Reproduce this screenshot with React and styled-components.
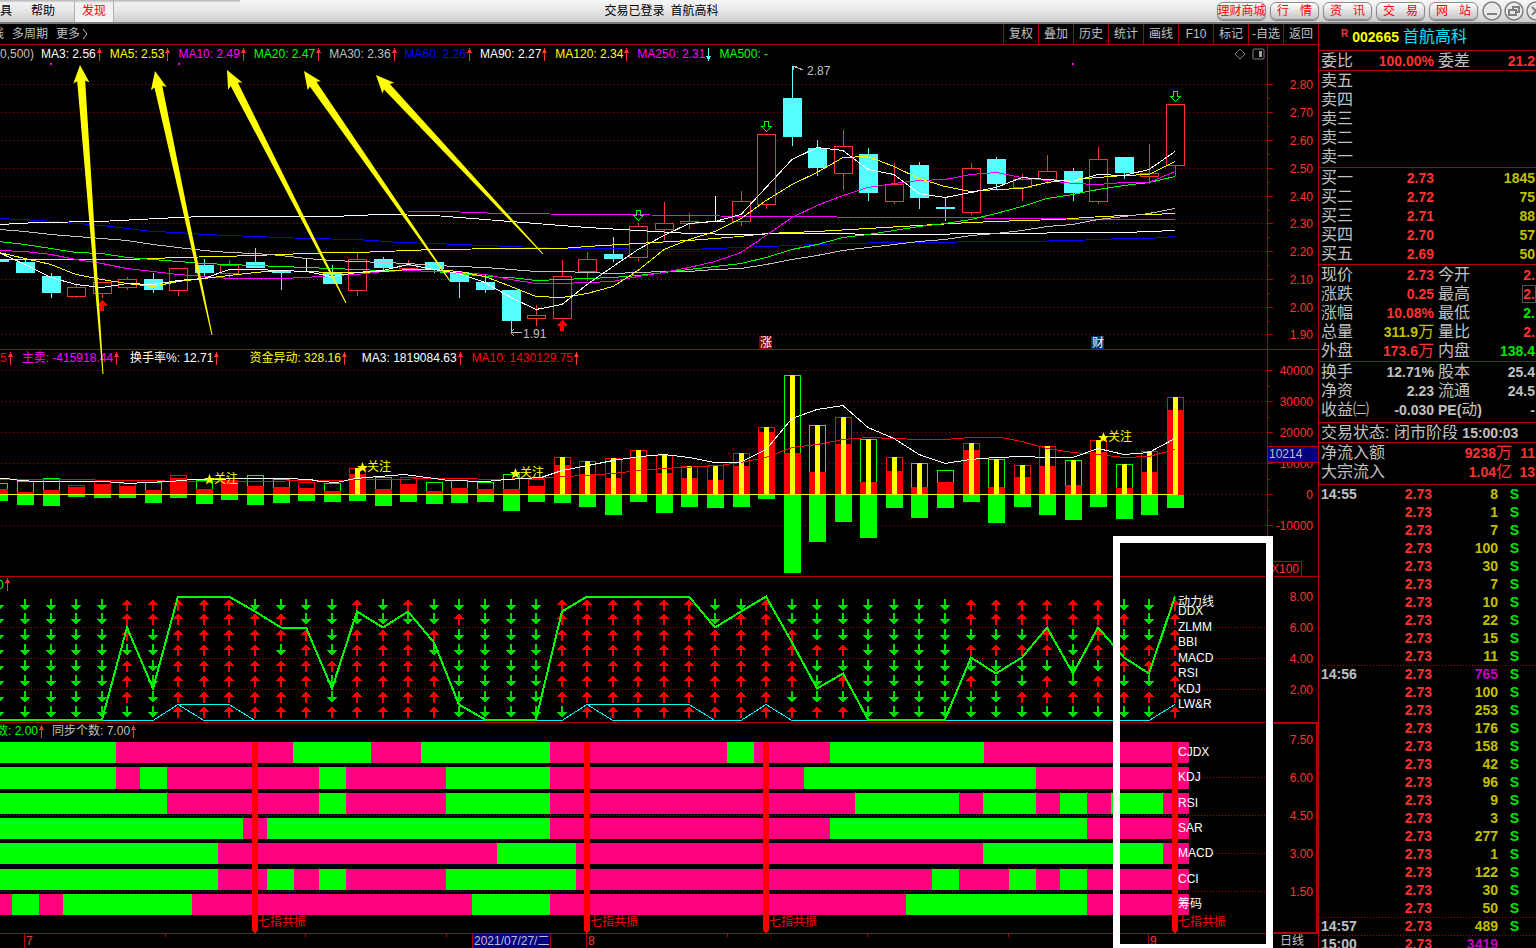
import styled, { createGlobalStyle } from "styled-components";

const GlobalStyle = createGlobalStyle`
  *,
  *::before {
    box-sizing: border-box;
  }

  body {
    margin: 0;
    background: #000;
    color: #c0c0c0;
    font: 12px/16px "Liberation Sans", "Noto Sans CJK SC", sans-serif;
    overflow: hidden;
  }

  button {
    font: inherit;
    cursor: pointer;
  }
`;

const colors = {
  line: "#b00000",
  red: "#ff3232",
  cyan: "#54ffff",
  gray: "#c0c0c0",
  yellow: "#ffff00",
  olive: "#c0c000",
  magenta: "#ff00ff",
  purple: "#c000c0",
  green: "#00ff00",
  darkGreen: "#00e600",
  blue: "#0000ff",
  white: "#ffffff",
};

/* ---------- Layout ---------- */

const Page = styled.div`
  display: flex;
  flex-direction: column;
  height: 100vh;
  overflow: hidden;
`;

const Workspace = styled.div`
  display: flex;
  flex: 1;
  min-height: 0;
`;

const ChartColumn = styled.main`
  position: relative;
  display: flex;
  flex-direction: column;
  flex: 1;
  min-width: 0;
  overflow: hidden;
`;

/* ---------- Title bar ---------- */

const TitleBar = styled.header`
  position: relative;
  display: flex;
  align-items: center;
  height: 24px;
  flex: none;
  overflow: hidden;
  color: #000;
  background: linear-gradient(#f6f6f6, #e6e6e6 50%, #cdcdcd);
  border-bottom: 2px solid #7c7c7c;

  &::before {
    content: "";
    position: absolute;
    top: 0;
    left: 0;
    width: 240px;
    height: 3px;
    background: linear-gradient(#b4b4b4, transparent);
  }
`;

const Menu = styled.nav`
  display: flex;
  height: 100%;
`;

const MenuButton = styled.button`
  padding: 0;
  width: ${(props) => props.$width}px;
  color: ${(props) => (props.$active ? "#ff0000" : "#000")};
  background: ${(props) => (props.$active ? "#f2f2f2" : "none")};
  border: solid #b0b0b0;
  border-width: ${(props) => (props.$active ? "0 1px" : "0")};
  text-align: ${(props) => props.$align || "center"};
`;

const Title = styled.div`
  display: flex;
  justify-content: center;
  gap: 6px;
  flex: 1;
  padding-right: 8px;
`;

const HeaderActions = styled.div`
  display: flex;
  align-items: center;
  gap: 4px;
  flex: none;
  margin-right: -8px;
`;

const PillButton = styled.button`
  display: flex;
  align-items: center;
  justify-content: ${(props) => (props.$spread ? "space-between" : "center")};
  width: 49px;
  height: 18px;
  padding: ${(props) => (props.$spread ? "0 6px" : "0")};
  color: #ff0000;
  white-space: nowrap;
  background: linear-gradient(#fff, #dcdcdc 60%, #c4c4c4);
  border: 1px solid #8c8c8c;
  border-radius: 6px;
  box-shadow: 0 1px 1px #808080;
`;

const WindowButton = styled.button`
  display: flex;
  width: 20px;
  height: 20px;
  margin-right: -2px;
  padding: 0;
  background: none;
  border: 0;
`;

/* ---------- Toolbar ---------- */

const Toolbar = styled.div`
  display: flex;
  justify-content: space-between;
  height: 21px;
  flex: none;
  overflow: hidden;
  border-bottom: 1px solid ${colors.line};
`;

const PeriodGroup = styled.div`
  display: flex;
  gap: 8px;
  margin-left: -8px;
`;

const ToolGroup = styled.div`
  display: flex;
`;

const ToolButton = styled.button`
  display: flex;
  align-items: center;
  gap: 2px;
  padding: 0;
  color: ${colors.gray};
  background: none;
  border: 0;
`;

const BoxedToolButton = styled(ToolButton)`
  justify-content: center;
  width: 35px;
  border-left: 1px solid ${colors.line};
`;

/* ---------- Chart panels ---------- */

const Panel = styled.section`
  display: grid;
  grid-template-columns: minmax(0, 1fr) 51px;
  flex: none;
  border-bottom: 1px solid ${colors.line};
`;

const PlotColumn = styled.div`
  min-width: 0;
  overflow: hidden;
`;

const Legend = styled.div`
  display: flex;
  align-items: center;
  height: ${(props) => props.$height || 16}px;
  margin-left: -${(props) => props.$cut || 0}px;
  padding-right: 2px;
  white-space: nowrap;
`;

const LegendItem = styled.span`
  display: flex;
  align-items: center;
  margin-right: ${(props) => props.$space || 7}px;
  color: ${(props) => props.$color};
`;

const LegendTools = styled.span`
  display: flex;
  align-items: center;
  gap: 6px;
  margin-left: auto;
`;

const Plot = styled.svg`
  display: block;
  width: 100%;
  height: ${(props) => props.$height}px;
  shape-rendering: crispEdges;
`;

/* Takes its height from the plot beside it */
const AxisColumn = styled.svg`
  display: block;
  width: 100%;
  height: 0;
  min-height: 100%;
  border: solid ${colors.line};
  border-width: ${(props) => (props.$selected ? "1px 2px 1px 1px" : "0 0 0 1px")};
  shape-rendering: crispEdges;
`;

const TimeAxis = styled.div`
  display: grid;
  grid-template-columns: minmax(0, 1fr) 51px;
  flex: 1;
  min-height: 14px;
  line-height: 14px;
`;

const PeriodName = styled.span`
  padding-left: 13px;
`;

const Annotations = styled.svg`
  position: absolute;
  inset: 0;
  width: 100%;
  height: 100%;
  pointer-events: none;
`;

/* ---------- Quote sidebar ---------- */

const Sidebar = styled.aside`
  width: 218px;
  flex: none;
  overflow: hidden;
  border-left: 1px solid ${colors.line};
`;

const StockHeader = styled.h1`
  display: flex;
  align-items: center;
  height: 27px;
  margin: 0;
  padding-left: 22px;
  color: ${colors.yellow};
  font-size: 14px;
  border-bottom: 1px solid ${colors.line};
`;

const StockFlag = styled.sup`
  align-self: flex-start;
  margin-right: 4px;
  color: ${colors.red};
  font-size: 10px;
  line-height: 20px;
`;

const StockName = styled.span`
  margin-left: 4px;
  color: #00e4ff;
  font-size: 16px;
  font-weight: 400;
`;

const QuoteTable = styled.table`
  display: block;
  padding-bottom: ${(props) => props.$pad || 0}px;
  border-bottom: 1px solid ${colors.line};

  tbody {
    display: block;
  }
`;

const QuoteRow = styled.tr`
  display: grid;
  grid-template-columns: ${(props) => props.$columns || "48px 65px 48px 1fr"};
  align-items: center;
  height: 19px;
  padding: 0 1px 0 2px;
  white-space: nowrap;
`;

const Label = styled.th`
  padding: 0;
  color: ${colors.gray};
  font-size: 16px;
  font-weight: 400;
  line-height: 20px;
  text-align: left;

  td + & {
    padding-left: 4px;
  }
`;

const Value = styled.td`
  justify-self: ${(props) => (props.$boxed ? "end" : "stretch")};
  padding: 0;
  color: ${(props) => colors[props.$tone] || colors.gray};
  font-size: 14px;
  font-weight: 700;
  line-height: 16px;
  text-align: right;
  outline: ${(props) => (props.$boxed ? "1px solid #555" : "none")};
`;

const Unit = styled.span`
  font-size: 16px;
  font-weight: 400;
`;

const BoldNote = styled.span`
  font-size: 14px;
  font-weight: 700;
`;

const TickTable = styled(QuoteTable)`
  border-bottom: 0;
`;

const TickRow = styled(QuoteRow)`
  height: 18px;
  background: ${(props) =>
    props.$divided
      ? `repeating-linear-gradient(90deg, ${colors.line} 0 1px, #000 1px 3px) 0 0 / 100% 1px no-repeat`
      : "none"};
`;

const TickTime = styled(Value)`
  text-align: left;
`;

/* ---------- Data ---------- */

const FIRST = -1;
const columnX = (index) => Math.round(25 + (index + FIRST) * 25.556);

// kind (u: up, d: down, f: flat), high, body top, body bottom, low
const candles = [
  ["d", 259, 259, 262, 262],
  ["d", 260, 262, 273, 273],
  ["d", 273, 276, 293, 298],
  ["u", 285, 287, 296, 298],
  ["u", 282, 282, 293, 298],
  ["u", 277, 279, 287, 290],
  ["d", 273, 279, 290, 293],
  ["u", 268, 268, 290, 296],
  ["d", 259, 265, 273, 277],
  ["u", 260, 265, 273, 279],
  ["d", 248, 262, 268, 268],
  ["d", 271, 271, 273, 290],
  ["f", 258, 271, 271, 271],
  ["d", 265, 272, 284, 284],
  ["u", 253, 259, 290, 296],
  ["d", 257, 259, 268, 270],
  ["u", 260, 265, 268, 270],
  ["d", 262, 262, 269, 273],
  ["d", 272, 272, 282, 298],
  ["d", 275, 282, 290, 293],
  ["d", 290, 290, 321, 333],
  ["u", 305, 315, 318, 326],
  ["u", 260, 276, 318, 318],
  ["u", 252, 259, 271, 281],
  ["d", 237, 254, 259, 262],
  ["u", 223, 226, 257, 261],
  ["u", 202, 223, 229, 240],
  ["u", 213, 221, 223, 229],
  ["f", 196, 221, 221, 222],
  ["u", 191, 201, 221, 226],
  ["u", 134, 134, 204, 209],
  ["d", 66, 98, 137, 146],
  ["d", 140, 148, 168, 176],
  ["u", 130, 146, 173, 190],
  ["d", 148, 154, 193, 201],
  ["u", 163, 184, 201, 204],
  ["d", 162, 165, 198, 209],
  ["d", 197, 207, 209, 221],
  ["u", 163, 168, 212, 215],
  ["d", 157, 159, 184, 189],
  ["u", 174, 179, 187, 201],
  ["u", 155, 171, 179, 184],
  ["d", 168, 171, 193, 201],
  ["u", 147, 159, 201, 204],
  ["d", 157, 157, 173, 179],
  ["u", 144, 173, 176, 184],
  ["u", 104, 104, 165, 176],
];

const averages = [
  {
    color: colors.gray,
    ys: [
      229, 231, 234, 236, 238, 240, 244, 247, 250, 252, 253, 255, 258, 260, 261, 262, 263, 265, 266, 267, 269, 271, 271,
      272, 273, 272, 271, 271, 269, 268, 264, 259, 255, 250, 247, 244, 241, 239, 235, 233, 230, 226, 224, 219, 216, 213,
      208,
    ],
  },
  {
    color: colors.green,
    ys: [
      241, 244, 248, 252, 253, 257, 259, 261, 263, 264, 265, 266, 267, 268, 269, 270, 270, 271, 273, 276, 277, 280, 279,
      278, 277, 275, 272, 269, 266, 263, 257, 249, 244, 237, 234, 230, 226, 223, 219, 213, 206, 198, 194, 189, 185, 182,
      176,
    ],
  },
  {
    color: colors.magenta,
    ys: [
      250, 251, 254, 259, 263, 268, 271, 274, 276, 278, 278, 278, 277, 275, 274, 271, 270, 271, 272, 274, 279, 283, 283,
      282, 281, 276, 272, 267, 261, 252, 235, 217, 205, 195, 187, 183, 180, 179, 174, 172, 177, 180, 183, 184, 182, 182,
      171,
    ],
  },
  {
    color: colors.yellow,
    ys: [
      252, 258, 264, 274, 279, 283, 286, 281, 278, 275, 272, 270, 271, 272, 272, 271, 269, 269, 271, 276, 286, 296, 297,
      293, 286, 270, 249, 239, 231, 218, 200, 184, 172, 157, 156, 166, 178, 186, 191, 189, 188, 182, 179, 177, 175, 174,
      161,
    ],
  },
  {
    color: colors.white,
    ys: [
      252, 264, 277, 284, 287, 283, 284, 280, 278, 269, 269, 270, 271, 276, 272, 270, 264, 269, 273, 282, 297, 309, 304,
      284, 266, 249, 235, 223, 221, 214, 187, 159, 147, 150, 169, 174, 193, 197, 192, 187, 177, 179, 181, 174, 175, 169,
      151,
    ],
  },
];

const longAverages = [
  {
    color: colors.blue,
    points:
      "0,218 40,220 66,222 102,225 127,228 153,231 178,232 204,234 255,236 306,238 357,239 400,242 434,243 510,246 562,248 613,248 640,249 690,249 740,247 792,245 843,243 894,242 1022,241 1073,240 1124,238 1149,238 1175,236",
  },
  {
    color: colors.yellow,
    points:
      "0,259 127,259 178,257 220,256 255,255 306,253 332,252 357,252 383,251 434,249 510,248 562,248 587,246 638,243 689,240 740,236 766,233 817,231 868,228 919,225 970,222 1022,220 1060,219 1085,217 1124,215 1175,213",
  },
  {
    color: colors.white,
    points:
      "0,224 38,222 100,221 178,217 204,216 332,216 380,214 434,215 485,219 536,223 587,227 638,230 689,233 740,234 792,233 830,233 880,234 1022,233 1073,232 1124,232 1175,230",
  },
  {
    color: colors.magenta,
    points: "408,211 447,211 500,213 600,214 700,215 740,216 932,217 1035,218 1098,219 1175,219",
  },
];

// outline (r/g), outline top, buy top, sell bottom, has yellow core
const volumes = [
  ["g", 483, 489, 501],
  ["g", 481, 492, 505],
  ["g", 478, 490, 506],
  ["r", 485, 487, 497],
  ["r", 481, 484, 498],
  ["r", 483, 486, 498],
  ["g", 482, 490, 503],
  ["r", 475, 478, 498],
  ["g", 480, 489, 504],
  ["r", 480, 482, 500],
  ["g", 475, 486, 505],
  ["g", 479, 487, 503],
  ["r", 482, 488, 501],
  ["g", 483, 491, 502],
  ["r", 468, 474, 501, 1],
  ["g", 477, 489, 506],
  ["r", 477, 484, 502],
  ["g", 482, 491, 504],
  ["g", 480, 488, 503],
  ["g", 482, 489, 502],
  ["g", 474, 489, 511],
  ["r", 479, 486, 502],
  ["r", 457, 465, 503, 1],
  ["r", 461, 474, 507, 1],
  ["r", 458, 478, 515, 1],
  ["r", 450, 457, 502, 1],
  ["r", 455, 473, 513, 1],
  ["r", 466, 478, 507, 1],
  ["r", 465, 480, 508, 1],
  ["r", 453, 466, 507, 1],
  ["r", 427, 432, 499, 1],
  ["g", 375, 453, 573, 1],
  ["g", 425, 472, 542, 1],
  ["r", 417, 444, 522, 1],
  ["g", 439, 482, 538, 1],
  ["r", 457, 471, 508, 1],
  ["g", 463, 487, 518, 1],
  ["g", 470, 482, 508],
  ["r", 443, 450, 502, 1],
  ["g", 459, 487, 523, 1],
  ["r", 465, 477, 507, 1],
  ["r", 446, 466, 515, 1],
  ["g", 460, 485, 520, 1],
  ["r", 440, 452, 507, 1],
  ["g", 464, 488, 519, 1],
  ["r", 451, 472, 515, 1],
  ["r", 397, 410, 508, 1],
];

const watchMarks = [
  [209, 479],
  [362, 467],
  [515, 473],
  [1103, 437],
];

// one letter per indicator, top to bottom
const DOWN = "dddddddd";
const UP = "uuuuuuuu";
const signals = [
  DOWN, DOWN, DOWN, DOWN, DOWN,
  "uuuduuud", "uudddddd",
  UP, UP, UP,
  "duuuuuuu", "duuduuuu", "dduuuuuu", "dddduddu", "uduuuuuu", "dduuuuuu", "uduuuuuu", "dduduuuu", "dudddddd",
  DOWN, DOWN, DOWN,
  "uuuuuuud",
  UP, UP, UP, UP, UP,
  "dduuuuuu", "duuuuuuu",
  UP,
  "dduuuudu", "dddudddu", "dddududu",
  DOWN, DOWN, DOWN, DOWN,
  "uudududd", "uududddd", "uududdud", "uuuuduud", "uuddddud", "uuuuduud", "duduudud", "ddduudud",
  UP,
];
const signalTops = [599, 613, 629, 644, 660, 675, 691, 706];
const signalNames = [
  ["动力线", 602],
  ["DDX", 611],
  ["ZLMM", 627],
  ["BBI", 642],
  ["MACD", 658],
  ["RSI", 673],
  ["KDJ", 689],
  ["LW&R", 704],
];

const strips = [
  { name: "CJDX", top: 742, first: "g", stops: [116, 293, 371, 421, 550, 727, 754, 830, 984, 1189] },
  { name: "KDJ", top: 767, first: "g", stops: [116, 140, 167, 319, 346, 446, 550, 804, 1036, 1189] },
  {
    name: "RSI",
    top: 793,
    first: "g",
    stops: [167, 319, 346, 446, 550, 855, 959, 983, 1036, 1060, 1087, 1111, 1163, 1189],
  },
  { name: "SAR", top: 818, first: "g", stops: [243, 267, 550, 830, 1087, 1189] },
  { name: "MACD", top: 843, first: "g", stops: [218, 497, 576, 983, 1163, 1189] },
  {
    name: "CCI",
    top: 869,
    first: "g",
    stops: [218, 267, 294, 319, 346, 446, 576, 932, 959, 1009, 1036, 1060, 1087, 1189],
  },
  { name: "筹码", top: 894, first: "r", stops: [12, 39, 63, 192, 472, 550, 906, 1087, 1189] },
];

const resonances = [255, 587, 766, 1175];

const pointers = [
  [80, 65, 103, 374],
  [155, 71, 212, 335],
  [227, 70, 346, 303],
  [304, 71, 450, 281],
  [376, 75, 543, 254],
];

const ticks = [
  ["14:55", "8"],
  ["", "1"],
  ["", "7"],
  ["", "100"],
  ["", "30"],
  ["", "7"],
  ["", "10"],
  ["", "22"],
  ["", "15"],
  ["", "11"],
  ["14:56", "765"],
  ["", "100"],
  ["", "253"],
  ["", "176"],
  ["", "158"],
  ["", "42"],
  ["", "96"],
  ["", "9"],
  ["", "3"],
  ["", "277"],
  ["", "1"],
  ["", "122"],
  ["", "30"],
  ["", "50"],
  ["14:57", "489"],
  ["15:00", "3419"],
];

/* ---------- Small drawings ---------- */

function TrendArrow({ down }) {
  return (
    <svg width="7" height="13" viewBox="0 0 7 13" shapeRendering="crispEdges" aria-hidden="true">
      <g
        fill={down ? colors.cyan : colors.red}
        transform={down ? "rotate(180 3.5 6.5)" : undefined}
      >
        <path d="M3 0h1v13h-1z" />
        <path d="M3 1h1v1h1v2h1v1h-5v-1h1v-2h1z" />
      </g>
    </svg>
  );
}

function Caption({ x, y, color = colors.white, anchor, children }) {
  return (
    <text x={x} y={y + 4} fill={color} fontSize="12" textAnchor={anchor}>
      {children}
    </text>
  );
}

function GridLines({ ys, dash = "1 3" }) {
  return ys.map((y) => (
    <line key={y} x1="1" x2="100%" y1={y + 0.5} y2={y + 0.5} stroke={colors.line} strokeDasharray={dash} />
  ));
}

function Series({ color, ys, points, width = 1 }) {
  const path = points || ys.map((y, i) => `${columnX(i)},${y}`).join(" ");
  return (
    <polyline points={path} transform="translate(0 0.5)" fill="none" stroke={color} strokeWidth={width} />
  );
}

function AxisScale({ marks, minor = [], top, ticked }) {
  return (
    <g transform={`translate(0 ${-top})`}>
      {marks.map(([label, y]) => (
        <g key={label}>
          {ticked && <path d={`M0 ${y + 0.5}h5`} stroke={colors.line} />}
          <Caption x="45" y={y + 1} color={colors.red} anchor="end">
            {label}
          </Caption>
        </g>
      ))}
      {minor.map((y) => (
        <path key={y} d={`M0 ${y + 0.5}h2`} stroke={colors.line} />
      ))}
    </g>
  );
}

function Candle({ x, data }) {
  const [kind, high, top, bottom, low] = data;
  const color = { u: colors.red, d: colors.cyan, f: colors.white }[kind];
  return (
    <g>
      <rect x={x} y={high} width="1" height={Math.max(low - high, 1)} fill={color} />
      {kind === "u" && (
        <rect x={x - 9 + 0.5} y={top + 0.5} width="18" height={bottom - top} fill="#000" stroke={color} />
      )}
      {kind === "d" && <rect x={x - 9} y={top} width="19" height={bottom - top} fill={color} />}
      {kind === "f" && <rect x={x - 9} y={top} width="19" height="1" fill={color} />}
    </g>
  );
}

function Badge({ x, y, fill, children }) {
  return (
    <g>
      <rect x={x} y={y} width="13" height="13" fill={fill} />
      <Caption x={x + 1} y={y + 7}>
        {children}
      </Caption>
    </g>
  );
}

/* ---------- Panels ---------- */

function PricePanel() {
  const grid = [84, 112, 140, 168, 196, 223, 251, 279, 307, 334];
  const labels = ["2.80", "2.70", "2.60", "2.50", "2.40", "2.30", "2.20", "2.10", "2.00", "1.90"];
  return (
    <Panel>
      <PlotColumn>
        <Legend $height={18}>
          <LegendItem $color={colors.gray}>0,500)</LegendItem>
          <LegendItem $color={colors.white}>MA3: 2.56<TrendArrow /></LegendItem>
          <LegendItem $color={colors.yellow}>MA5: 2.53<TrendArrow /></LegendItem>
          <LegendItem $color={colors.magenta}>MA10: 2.49<TrendArrow /></LegendItem>
          <LegendItem $color={colors.green}>MA20: 2.47<TrendArrow /></LegendItem>
          <LegendItem $color={colors.gray}>MA30: 2.36<TrendArrow /></LegendItem>
          <LegendItem $color={colors.blue}>MA60: 2.26<TrendArrow /></LegendItem>
          <LegendItem $color={colors.white}>MA90: 2.27<TrendArrow /></LegendItem>
          <LegendItem $color={colors.yellow}>MA120: 2.34<TrendArrow /></LegendItem>
          <LegendItem $color={colors.magenta}>MA250: 2.31<TrendArrow down /></LegendItem>
          <LegendItem $color={colors.green}>MA500: -</LegendItem>
          <LegendTools>
            <svg width="12" height="12" viewBox="0 0 12 12" aria-hidden="true">
              <path d="M6 1l5 5-5 5-5-5z" fill="none" stroke="#808080" />
            </svg>
            <svg width="13" height="12" viewBox="0 0 13 12" aria-hidden="true">
              <rect x="1" y="1" width="11" height="10" rx="1" fill="none" stroke="#808080" />
              <path d="M7 3h3v6h-3z" fill="#a0a0a0" />
            </svg>
          </LegendTools>
        </Legend>
        <Plot $height={286} role="img" aria-label="日线">
          <g transform="translate(0 -63)">
            <GridLines ys={grid} />
            {[[50, 63], [178, 63], [1072, 63]].map(([x, y]) => (
              <rect key={x} x={x} y={y} width="2" height="2" fill={colors.magenta} />
            ))}
            {candles.map((data, i) => (
              <Candle key={i} x={columnX(i)} data={data} />
            ))}
            {longAverages.map((line) => (
              <Series key={line.points} {...line} />
            ))}
            {averages.map((line) => (
              <Series key={line.color} {...line} />
            ))}
            {[[638, 210], [766, 121], [1175, 91]].map(([x, y]) => (
              <path
                key={x}
                d={`M${x - 1.5} ${y + 0.5}h4v5h3l-5 5l-5 -5h3z`}
                fill="none"
                stroke={colors.green}
              />
            ))}
            {[[102, 300], [562, 320]].map(([x, y]) => (
              <path key={x} d={`M${x} ${y}l5 5v1h-3v5h-4v-5h-3v-1z`} fill="#ff0000" />
            ))}
            <path d="M793 66l10 4M793 66h4M793 66v4" fill="none" stroke={colors.gray} />
            <Caption x="807" y={71} color={colors.gray}>2.87</Caption>
            <path d="M511 332.5h11M511 332l3 -3M511 333l3 3" fill="none" stroke={colors.gray} />
            <Caption x="523" y={334} color={colors.gray}>1.91</Caption>
            <Badge x={759} y={336} fill="#800000">涨</Badge>
            <Badge x={1091} y={336} fill="#003366">财</Badge>
          </g>
        </Plot>
      </PlotColumn>
      <AxisColumn>
        <AxisScale
          top={45}
          ticked
          marks={labels.map((label, i) => [label, grid[i]])}
          minor={[98, 126, 154, 182, 210, 237, 265, 293, 321]}
        />
      </AxisColumn>
    </Panel>
  );
}

function VolumePanel() {
  return (
    <Panel>
      <PlotColumn>
        <Legend>
          <LegendItem $color="#ff0000" $space={8}>5<TrendArrow /></LegendItem>
          <LegendItem $color={colors.magenta} $space={10}>主卖: -415918.44<TrendArrow /></LegendItem>
          <LegendItem $color={colors.white} $space={29}>换手率%: 12.71<TrendArrow /></LegendItem>
          <LegendItem $color={colors.yellow} $space={14}>资金异动: 328.16<TrendArrow /></LegendItem>
          <LegendItem $color={colors.white} $space={8}>MA3: 1819084.63<TrendArrow /></LegendItem>
          <LegendItem $color="#ff0000">MA10: 1430129.75<TrendArrow /></LegendItem>
        </Legend>
        <Plot $height={210} role="img" aria-label="资金异动">
          <g transform="translate(0 -366)">
            <GridLines ys={[370, 401, 432, 463, 494, 525]} />
            {volumes.map(([kind, top, buyTop, sellBottom, core], i) => {
              const x = columnX(i);
              return (
                <g key={i}>
                  <rect
                    x={x - 7.5}
                    y={top + 0.5}
                    width="16"
                    height={494 - top}
                    fill="#000"
                    stroke={kind === "r" ? "#ff0000" : colors.green}
                  />
                  <rect x={x - 8} y={buyTop} width="17" height={494 - buyTop} fill="#ff0000" />
                  <rect x={x - 8} y="495" width="17" height={sellBottom - 495} fill={colors.green} />
                  {core && <rect x={x - 2} y={top} width="5" height={494 - top} fill={colors.yellow} />}
                </g>
              );
            })}
            <path d="M0 494.5H1178" stroke={colors.yellow} />
            <Series
              color="#ff0000"
              points="0,479 90,479 100,480 230,481 345,480 355,479 470,478 485,479 540,478 562,476 587,475 613,473 640,470 664,468 700,466 720,465 740,462 766,457 792,447 817,444 843,439 868,437 894,438 919,439 945,439 970,437 1001,437 1022,441 1047,448 1073,452 1098,454 1124,457 1149,456 1175,449"
            />
            <Series
              color={colors.white}
              points="0,478 6,478 20,480 38,481 104,481 131,483 143,482 171,481 192,479 261,478 286,478 310,479 320,481 337,482 355,478 404,474 427,477 449,480 486,481 506,479 541,477 562,470 588,465 613,460 640,456 664,454 689,457 715,462 740,462 766,449 792,418 817,409 843,405 868,427 894,438 919,454 945,463 970,459 996,457 1022,456 1047,457 1073,457 1098,448 1124,454 1149,452 1175,438"
            />
            {watchMarks.map(([x, y]) => (
              <g key={x}>
                <path
                  d={`M${x + 0.5} ${y - 5}l1.5 4h4l-3 2.5 1 4-3.5-2.500-3.500 2.500 1-4-3-2.500h4z`}
                  fill={colors.yellow}
                  shapeRendering="auto"
                />
                <Caption x={x + 5} y={y} color={colors.yellow}>关注</Caption>
              </g>
            ))}
          </g>
        </Plot>
      </PlotColumn>
      <AxisColumn>
        <AxisScale
          top={350}
          ticked
          marks={[
            ["40000", 370],
            ["30000", 401],
            ["20000", 432],
            ["10000", 463],
            ["0", 494],
            ["-10000", 525],
          ]}
          minor={[386, 417, 448, 479, 510]}
        />
        <rect x="-1" y="96" width="60" height="16" fill="#000080" stroke={colors.line} />
        <Caption x="1" y={104} color={colors.gray}>10214</Caption>
        <rect x="-1" y="211" width="34" height="15" fill="none" stroke={colors.line} />
        <Caption x="31" y={219} color={colors.red} anchor="end">X100</Caption>
      </AxisColumn>
    </Panel>
  );
}

function SignalPanel() {
  const counts = signals.map((column) => column.replaceAll("d", "").length);
  const full = counts.map((count) => (count === 8 ? 704 : 720));
  const started = counts.map((count, i) => (count === 8 && counts[i - 1] !== 8 ? 704 : 720));
  return (
    <Panel>
      <PlotColumn>
        <Legend $height={15} $cut={3}>
          <LegendItem $color={colors.green}>0<TrendArrow /></LegendItem>
        </Legend>
        <Plot $height={130} role="img" aria-label="动力线">
          <g transform="translate(0 -592)">
            <GridLines ys={[627, 658, 689]} dash="1 2" />
            {signals.map((column, i) =>
              [...column].map((way, row) => (
                <path
                  key={`${i}-${row}`}
                  transform={`translate(${columnX(i)} ${signalTops[row]})`}
                  d={way === "u" ? "M0 0l5 6h-4v6h-2v-6h-4z" : "M-1 0h2v6h4l-5 6l-5-6h4z"}
                  fill={way === "u" ? "#ff0000" : "#00dc00"}
                />
              ))
            )}
            <Series color="#00ffff" ys={full} />
            <Series color="#00ffff" ys={started} />
            <Series color={colors.green} ys={counts.map((count) => Math.round(719 - count * 15.4))} width={2} />
            {signalNames.map(([name, y]) => (
              <Caption key={name} x="1178" y={y}>
                {name}
              </Caption>
            ))}
          </g>
        </Plot>
      </PlotColumn>
      <AxisColumn>
        <AxisScale
          top={577}
          marks={[
            ["8.00", 596],
            ["6.00", 627],
            ["4.00", 658],
            ["2.00", 689],
          ]}
        />
      </AxisColumn>
    </Panel>
  );
}

function ResonancePanel() {
  return (
    <Panel>
      <PlotColumn>
        <Legend $cut={4}>
          <LegendItem $color={colors.green}>数: 2.00<TrendArrow /></LegendItem>
          <LegendItem $color={colors.gray}>同步个数: 7.00<TrendArrow /></LegendItem>
        </Legend>
        <Plot $height={194} role="img" aria-label="七指共振">
          <g transform="translate(0 -739)">
            <GridLines ys={[777, 815, 853, 891]} dash="1 2" />
            {strips.map(({ name, top, first, stops }) =>
              stops.map((end, i) => {
                const start = i ? stops[i - 1] : 0;
                const isGreen = (i % 2 === 0) === (first === "g");
                return (
                  <rect
                    key={`${name}-${end}`}
                    x={start}
                    y={top}
                    width={end - start}
                    height={name === "KDJ" ? 22 : 21}
                    fill={isGreen ? colors.green : "#ff0080"}
                  />
                );
              })
            )}
            {resonances.map((x) => (
              <g key={x}>
                <path d={`M${x - 3} 742h6v188l-2 3h-2l-2-3z`} fill="#ff0000" />
                <Caption x={x + 3} y={922} color="#ff0000">七指共振</Caption>
              </g>
            ))}
            {strips.map(({ name, top }) => (
              <Caption key={name} x="1178" y={top + 10}>
                {name}
              </Caption>
            ))}
          </g>
        </Plot>
      </PlotColumn>
      <AxisColumn $selected>
        <AxisScale
          top={724}
          marks={[
            ["7.50", 739],
            ["6.00", 777],
            ["4.50", 815],
            ["3.00", 853],
            ["1.50", 891],
          ]}
        />
      </AxisColumn>
    </Panel>
  );
}

function TimeScale() {
  return (
    <TimeAxis>
      <Plot $height={14}>
        {[24, 586, 1148].map((x) => (
          <path key={x} d={`M${x + 0.5} 0v14`} stroke={colors.line} />
        ))}
        {[165, 305, 446, 727, 867, 1008].map((x) => (
          <path key={x} d={`M${x + 0.5} 0v3`} stroke={colors.line} />
        ))}
        <Caption x="26" y={7} color={colors.red}>7</Caption>
        <Caption x="588" y={7} color={colors.red}>8</Caption>
        <Caption x="1150" y={7} color={colors.red}>9</Caption>
        <rect x="472.5" y="-0.5" width="78" height="16" fill="#000080" stroke={colors.line} />
        <Caption x="474" y={7} color={colors.gray}>2021/07/27/二</Caption>
      </Plot>
      <PeriodName>日线</PeriodName>
    </TimeAxis>
  );
}

// Tapered arrow from a thin tail to a wide head
function pointerShape([tipX, tipY, tailX, tailY]) {
  const length = Math.hypot(tailX - tipX, tailY - tipY);
  const dx = (tailX - tipX) / length;
  const dy = (tailY - tipY) / length;
  const at = (along, side) => `${tipX + dx * along - dy * side},${tipY + dy * along + dx * side}`;
  return [at(0, 0), at(18, 8), at(16, 4), at(length, 0.5), at(length, -0.5), at(16, -4), at(18, -8)].join(" ");
}

function ChartAnnotations() {
  return (
    <Annotations aria-hidden="true">
      <g transform="translate(0 -24)">
        {pointers.map((pointer) => (
          <polygon key={pointer[0]} points={pointerShape(pointer)} fill={colors.yellow} />
        ))}
        <rect x="1116.5" y="539.5" width="153" height="408" fill="none" stroke="#fff" strokeWidth="7" />
      </g>
    </Annotations>
  );
}

/* ---------- Sidebar ---------- */

function Quote({ row }) {
  const [label, value, tone, unit, label2, value2, tone2, boxed] = row;
  return (
    <QuoteRow>
      <Label scope="row">{label}</Label>
      <Value $tone={tone}>
        {value}
        {unit && <Unit>{unit}</Unit>}
      </Value>
      <Label scope="row">{label2 === "PE" ? <><BoldNote>PE(</BoldNote>动<BoldNote>)</BoldNote></> : label2}</Label>
      <Value $tone={tone2} $boxed={boxed}>{value2}</Value>
    </QuoteRow>
  );
}

function QuoteSidebar() {
  const bids = [
    ["买一", "2.73", "1845"],
    ["买二", "2.72", "75"],
    ["买三", "2.71", "88"],
    ["买四", "2.70", "57"],
    ["买五", "2.69", "50"],
  ];
  const prices = [
    ["现价", "2.73", "red", "", "今开", "2.", "red"],
    ["涨跌", "0.25", "red", "", "最高", "2.", "red", true],
    ["涨幅", "10.08%", "red", "", "最低", "2.", "darkGreen"],
    ["总量", "311.9", "olive", "万", "量比", "2.", "red"],
    ["外盘", "173.6", "red", "万", "内盘", "138.4", "darkGreen"],
  ];
  const basics = [
    ["换手", "12.71%", "gray", "", "股本", "25.4", "gray"],
    ["净资", "2.23", "gray", "", "流通", "24.5", "gray"],
    ["收益㈡", "-0.030", "gray", "", "PE", "-", "gray"],
  ];
  return (
    <Sidebar>
      <StockHeader>
        <StockFlag>R</StockFlag>
        002665
        <StockName>首航高科</StockName>
      </StockHeader>
      <QuoteTable>
        <tbody>
          <Quote row={["委比", "100.00%", "red", "", "委差", "21.2", "red"]} />
        </tbody>
      </QuoteTable>
      <QuoteTable $pad={1}>
        <tbody>
          {["卖五", "卖四", "卖三", "卖二", "卖一"].map((name) => (
            <QuoteRow key={name}>
              <Label scope="row">{name}</Label>
            </QuoteRow>
          ))}
        </tbody>
      </QuoteTable>
      <QuoteTable $pad={1}>
        <tbody>
          {bids.map(([name, price, volume]) => (
            <QuoteRow key={name} $columns="48px 65px 1fr">
              <Label scope="row">{name}</Label>
              <Value $tone="red">{price}</Value>
              <Value $tone="olive">{volume}</Value>
            </QuoteRow>
          ))}
        </tbody>
      </QuoteTable>
      <QuoteTable $pad={1}>
        <tbody>
          {prices.map((row) => (
            <Quote key={row[0]} row={row} />
          ))}
        </tbody>
      </QuoteTable>
      <QuoteTable $pad={3}>
        <tbody>
          {basics.map((row) => (
            <Quote key={row[0]} row={row} />
          ))}
        </tbody>
      </QuoteTable>
      <QuoteTable>
        <tbody>
          <QuoteRow $columns="1fr">
            <Label scope="row">
              交易状态: 闭市阶段 <BoldNote>15:00:03</BoldNote>
            </Label>
          </QuoteRow>
        </tbody>
      </QuoteTable>
      <QuoteTable $pad={3}>
        <tbody>
          {[["净流入额", "9238", "万", "11"], ["大宗流入", "1.04", "亿", "13"]].map(([name, value, unit, rank]) => (
            <QuoteRow key={name} $columns="64px 127px 1fr">
              <Label scope="row">{name}</Label>
              <Value $tone="red">
                {value}
                <Unit>{unit}</Unit>
              </Value>
              <Value $tone="red">{rank}</Value>
            </QuoteRow>
          ))}
        </tbody>
      </QuoteTable>
      <TickTable>
        <tbody>
          {ticks.map(([time, volume], i) => (
            <TickRow key={i} $columns="48px 63px 66px 21px" $divided={i > 0 && time !== ""}>
              <TickTime>{time}</TickTime>
              <Value $tone="red">2.73</Value>
              <Value $tone={volume === "765" || volume === "3419" ? "purple" : "olive"}>{volume}</Value>
              <Value $tone="darkGreen">{time === "15:00" ? "" : "S"}</Value>
            </TickRow>
          ))}
        </tbody>
      </TickTable>
    </Sidebar>
  );
}

/* ---------- App ---------- */

const windowIcons = [
  { name: "最小化", d: "M5 13h10" },
  { name: "还原", d: "M9 8V6h6v5h-2M5 9h7v5h-7z" },
  { name: "关闭", d: "M6 6l8 8M14 6l-8 8" },
];

function App() {
  return (
    <Page>
      <GlobalStyle />
      <TitleBar>
        <Menu>
          <MenuButton $width={12} $align="left">具</MenuButton>
          <MenuButton $width={62}>帮助</MenuButton>
          <MenuButton $width={40} $active>发现</MenuButton>
        </Menu>
        <Title>
          <span>交易已登录</span>
          <span>首航高科</span>
        </Title>
        <HeaderActions>
          <PillButton>理财商城</PillButton>
          {["行情", "资讯", "交易", "网站"].map((name) => (
            <PillButton key={name} $spread aria-label={name}>
              <span>{name[0]}</span>
              <span>{name[1]}</span>
            </PillButton>
          ))}
          {windowIcons.map(({ name, d }) => (
            <WindowButton key={name} aria-label={name}>
              <svg width="20" height="20" viewBox="0 0 20 20" fill="none" stroke="#808080">
                <circle cx="10" cy="10" r="9" fill="#e8e8e8" strokeWidth="1.5" />
                <path d={d} strokeWidth="2" />
              </svg>
            </WindowButton>
          ))}
        </HeaderActions>
      </TitleBar>
      <Workspace>
        <ChartColumn>
          <Toolbar>
            <PeriodGroup>
              <ToolButton>线</ToolButton>
              <ToolButton>多周期</ToolButton>
              <ToolButton>
                更多
                <svg width="6" height="12" viewBox="0 0 6 12" fill="none" stroke={colors.gray} aria-hidden="true">
                  <path d="M1 1l4 5-4 5" />
                </svg>
              </ToolButton>
            </PeriodGroup>
            <ToolGroup>
              {["复权", "叠加", "历史", "统计", "画线", "F10", "标记", "-自选", "返回"].map((name) => (
                <BoxedToolButton key={name}>{name}</BoxedToolButton>
              ))}
            </ToolGroup>
          </Toolbar>
          <PricePanel />
          <VolumePanel />
          <SignalPanel />
          <ResonancePanel />
          <TimeScale />
          <ChartAnnotations />
        </ChartColumn>
        <QuoteSidebar />
      </Workspace>
    </Page>
  );
}

export default App;
